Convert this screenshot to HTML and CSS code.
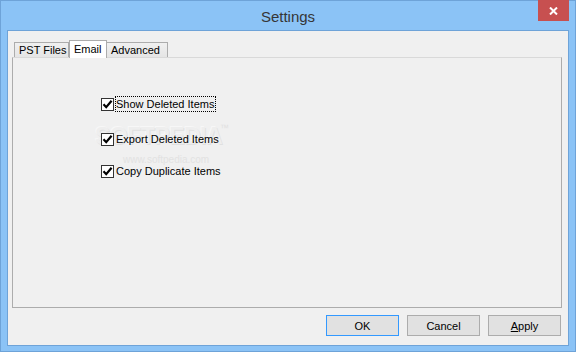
FILE: index.html
```html
<!DOCTYPE html>
<html>
<head>
<meta charset="utf-8">
<link rel="stylesheet" href="styles.css">
</head>
<body>
<div class="window">
  <div class="titlebar"><span class="title">Settings</span></div>
  <button class="close" aria-label="Close"><svg width="9" height="8" viewBox="0 0 9 8"><path d="M1 0.5 L8 7.5 M8 0.5 L1 7.5" stroke="#fff" stroke-width="2" fill="none"/></svg></button>
  <div class="client">
    <div class="tabs">
      <div class="tabstrip">
        <div class="tab tab-pst">PST Files</div>
        <div class="tab tab-email active">Email</div>
        <div class="tab tab-adv">Advanced</div>
      </div>
      <div class="panel">
        <div class="watermark"><span class="wm-big">SOFTPEDIA</span><span class="wm-tm">™</span><span class="wm-url">www.softpedia.com</span></div>
        <div class="options">
          <div class="option"><span class="box"><svg width="11" height="11" viewBox="0 0 11 11"><path d="M1.5 5.3 L4.2 8.2 L9.6 1.8" stroke="#000" stroke-width="2.2" fill="none"/></svg></span><span class="label focused">Show Deleted Items</span></div>
          <div class="option second"><span class="box"><svg width="11" height="11" viewBox="0 0 11 11"><path d="M1.5 5.3 L4.2 8.2 L9.6 1.8" stroke="#000" stroke-width="2.2" fill="none"/></svg></span><span class="label">Export Deleted Items</span></div>
          <div class="option third"><span class="box"><svg width="11" height="11" viewBox="0 0 11 11"><path d="M1.5 5.3 L4.2 8.2 L9.6 1.8" stroke="#000" stroke-width="2.2" fill="none"/></svg></span><span class="label">Copy Duplicate Items</span></div>
        </div>
      </div>
    </div>
    <div class="buttons">
      <button class="btn default">OK</button>
      <button class="btn">Cancel</button>
      <button class="btn"><u>A</u>pply</button>
    </div>
  </div>
</div>
</body>
</html>
```
FILE: styles.css
```css
html, body {
  margin: 0;
  padding: 0;
  background: #8bc3f6;
}
.window {
  position: relative;
  box-sizing: border-box;
  width: 576px;
  height: 352px;
  border: 1px solid #6ea3d8;
  background: #8bc3f6;
  display: flex;
  flex-direction: column;
  font-family: "Liberation Sans", Arial, sans-serif;
  font-size: 11px;
  color: #000;
}
.titlebar {
  height: 29px;
  display: flex;
  align-items: center;
  justify-content: center;
}
.title {
  font-family: "Liberation Sans", Arial, sans-serif;
  font-size: 15px;
  color: #363636;
  margin-top: 1px;
}
.close {
  position: absolute;
  top: -1px;
  right: 6px;
  width: 31px;
  height: 21px;
  border: 0;
  padding: 0;
  margin: 0;
  background: #c75050;
  display: flex;
  align-items: center;
  justify-content: center;
}
.client {
  margin: 0 6px 5px 6px;
  height: 316px;
  box-sizing: border-box;
  border: 1px solid #6ea3d8;
  background: #f0f0f0;
  display: flex;
  flex-direction: column;
}
.tabs {
  margin: 9px 6px 0 4px;
  display: flex;
  flex-direction: column;
}
.tabstrip {
  display: flex;
  align-items: flex-end;
  height: 17px;
  padding-left: 2px;
  position: relative;
  z-index: 1;
}
.tab {
  box-sizing: border-box;
  height: 15px;
  border: 1px solid #acacac;
  border-bottom: 0;
  background: linear-gradient(#f0f0f0, #e5e5e5);
  line-height: 14px;
  padding-left: 4px;
  white-space: nowrap;
}
.tab-pst { width: 55px; }
.tab-email { width: 38px; }
.tab-adv { width: 61px; border-left: 0; }
.tab.active {
  height: 18px;
  margin-bottom: -1px;
  background: #fff;
  line-height: 16px;
  padding-left: 4px;
}
.panel {
  position: relative;
  box-sizing: border-box;
  height: 251px;
  border: 1px solid #acacac;
  border-top-color: #d9d9d9;
  background: #f0f0f0;
}
.options {
  display: flex;
  flex-direction: column;
  padding: 38px 0 0 88px;
  position: relative;
}
.option {
  display: flex;
  align-items: center;
  height: 16px;
}
.option.second { margin-top: 19px; }
.option.third { margin-top: 16px; }
.box {
  box-sizing: border-box;
  width: 13px;
  height: 13px;
  border: 1px solid #333;
  background: #fff;
  display: flex;
  align-items: center;
  justify-content: center;
}
.label {
  margin-left: 1px;
  border: 1px solid transparent;
  padding-right: 1px;
  line-height: 14px;
}
.label.focused {
  border: 1px dotted #000;
}
.watermark {
  position: absolute;
  left: 82px;
  top: 65px;
  width: 150px;
  height: 50px;
  pointer-events: none;
}
.wm-big {
  position: absolute;
  left: 0;
  top: 0;
  font-family: "Liberation Sans", Arial, sans-serif;
  font-weight: bold;
  font-size: 23px;
  letter-spacing: -0.5px;
  color: #eeeeee;
  text-shadow: 1px 1px 0 #e0e0e0, -1px -1px 0 #f7f7f7;
}
.wm-tm {
  position: absolute;
  left: 125px;
  top: 0;
  font-size: 9px;
  color: #e0e0e0;
}
.wm-url {
  position: absolute;
  left: 28px;
  top: 31px;
  font-size: 10px;
  color: #e2e2e2;
}
.buttons {
  display: flex;
  justify-content: flex-end;
  gap: 8px;
  margin: 7px 7px 0 0;
}
.btn {
  box-sizing: border-box;
  width: 73px;
  height: 21px;
  margin: 0;
  padding: 0;
  border: 1px solid #acacac;
  background: #e1e1e1;
  font-family: "Liberation Sans", Arial, sans-serif;
  font-size: 11px;
  color: #000;
}
.btn.default {
  border-color: #3399ff;
}
```
